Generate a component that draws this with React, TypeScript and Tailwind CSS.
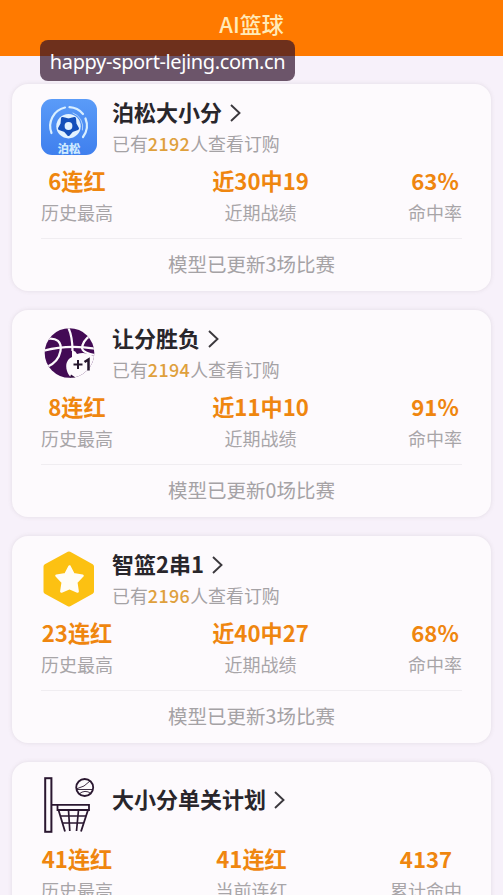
type Stat = { value: string; label: string }

type Plan = {
  id: string
  title: string
  buyers?: string
  stats: Stat[]
  footer?: string
}

const plans: Plan[] = [
  {
    id: "bosong",
    title: "泊松大小分",
    buyers: "2192",
    stats: [
      { value: "6连红", label: "历史最高" },
      { value: "近30中19", label: "近期战绩" },
      { value: "63%", label: "命中率" },
    ],
    footer: "模型已更新3场比赛",
  },
  {
    id: "spread",
    title: "让分胜负",
    buyers: "2194",
    stats: [
      { value: "8连红", label: "历史最高" },
      { value: "近11中10", label: "近期战绩" },
      { value: "91%", label: "命中率" },
    ],
    footer: "模型已更新0场比赛",
  },
  {
    id: "parlay",
    title: "智篮2串1",
    buyers: "2196",
    stats: [
      { value: "23连红", label: "历史最高" },
      { value: "近40中27", label: "近期战绩" },
      { value: "68%", label: "命中率" },
    ],
    footer: "模型已更新3场比赛",
  },
  {
    id: "single",
    title: "大小分单关计划",
    stats: [
      { value: "41连红", label: "历史最高" },
      { value: "41连红", label: "当前连红" },
      { value: "4137", label: "累计命中" },
    ],
  },
]

function BosongIcon() {
  return (
    <svg viewBox="0 0 56 56" className="h-14 w-14">
      <defs>
        <linearGradient id="bosong-bg" x1="0" y1="0" x2="0" y2="1">
          <stop offset="0" stopColor="#5a9bf8" />
          <stop offset="1" stopColor="#3f7fee" />
        </linearGradient>
      </defs>
      <rect width="56" height="56" rx="11" fill="url(#bosong-bg)" />
      <g fill="none" stroke="#d9efff" strokeWidth="2.2" strokeLinecap="round">
        <path d="M24 8.5A19 19 0 0 0 10.5 34" />
        <path d="M28.5 8.2A19 19 0 0 1 42 15" />
        <path d="M44.5 19.5A19 19 0 0 1 42 38" />
        <path d="M32 14A14.8 14.8 0 0 1 41.5 31" strokeWidth="1" opacity="0.7" />
      </g>
      <circle cx="27.5" cy="27.2" r="12.2" fill="#e2f2ff" />
      <path
        d="M21.5 19.5L27.5 21L33.5 19.5L34 25L36.5 29.5L31 31.5L27.5 35.5L24 31.5L18.5 29.5L21 25Z"
        fill="#1550ba"
        stroke="#1550ba"
        strokeWidth="3"
        strokeLinejoin="round"
      />
      <circle cx="27.5" cy="27" r="3.9" fill="#e2f2ff" />
      <text x="28" y="53.5" textAnchor="middle" fontSize="11.5" fontWeight="900" fill="#cdeaff">
        泊松
      </text>
    </svg>
  )
}

function BallIcon() {
  return (
    <svg viewBox="0 0 56 56" className="h-14 w-14">
      <defs>
        <clipPath id="ball-clip">
          <circle cx="28.5" cy="28" r="24.8" />
        </clipPath>
      </defs>
      <g clipPath="url(#ball-clip)">
        <rect width="56" height="56" fill="#430b55" />
        <g fill="none" stroke="#fdfafd" strokeWidth="2.2">
          <path d="M2 26C18 21.5 38 21 56 24" />
          <path d="M27 2C30.5 9 31.5 15 31.5 26" />
          <path d="M5 14C16 12 21 17 19.5 26C18 34 13 39 6 42" />
          <path d="M50 10C44 14 41 18 41 24" />
          <path d="M41 24C43 27.5 48 29 54 30" />
        </g>
        <path d="M31 26Q34 25 36 29Q46 26 56 33V56H31C30 51 27 50 26 46C24 40 26 34 31 32Z" fill="#fdfafd" />
        <path d="M28 55L30 49.5L34.5 52.5V56Z" fill="#2d0a3a" />
      </g>
      <path d="M32.5 39.5H41.5M37 35V44" stroke="#24152c" strokeWidth="2" />
      <path d="M43.5 37L47.5 34.5V45.5" fill="none" stroke="#24152c" strokeWidth="2.5" />
    </svg>
  )
}

function StarIcon() {
  return (
    <svg viewBox="0 0 56 56" className="h-14 w-14">
      <path
        d="M28 3L50.5 15.5V40.5L28 53L5 40.5V15.5Z"
        fill="#fcc112"
        stroke="#fcc112"
        strokeWidth="5"
        strokeLinejoin="round"
      />
      <path
        d="M28.5 15.5L32.5 23.3L41.5 24.7L35.2 31.3L36.6 40.5L28.5 37L20.4 40.5L21.8 31.3L15.5 24.7L24.5 23.3Z"
        fill="#fffdf6"
        stroke="#fffdf6"
        strokeWidth="2.6"
        strokeLinejoin="round"
      />
    </svg>
  )
}

function HoopIcon() {
  return (
    <svg viewBox="0 0 56 56" className="h-14 w-14" fill="none" stroke="#2a1730">
      <rect x="4.2" y="1.2" width="6.2" height="53.6" strokeWidth="2" />
      <path d="M11 27.8H48V33H16.5V28" strokeWidth="1.8" />
      <path d="M17.5 33L24 54.5M47 33L40 54.5" strokeWidth="1.8" />
      <path d="M27.5 33L28.8 54M37.5 33L35.5 54M19 39H45M21 46H43" strokeWidth="1.7" />
      <circle cx="43.7" cy="10.5" r="8.5" strokeWidth="1.8" />
      <path d="M35 12Q44 10 49 4M35.5 12.5H52M38 17Q44 12 50 16.5" strokeWidth="0.9" />
    </svg>
  )
}

function PlanIcon({ id }: { id: string }) {
  if (id === "bosong") return <BosongIcon />
  if (id === "spread") return <BallIcon />
  if (id === "parlay") return <StarIcon />
  return <HoopIcon />
}

function PlanCard({ plan }: { plan: Plan }) {
  return (
    <article className="h-[207px] shrink-0 rounded-2xl bg-[#fdfafd] px-[29px] pt-[15px] shadow-[0_0_4px_rgba(120,110,110,0.16)]">
      <div className="flex h-14 gap-[15px]">
        <div className="shrink-0">
          <PlanIcon id={plan.id} />
        </div>
        <div className={plan.buyers ? "-mt-[3px]" : "mt-1.5"}>
          <h2 className="flex h-8 items-center gap-2 text-[22px] leading-8 font-bold whitespace-nowrap text-[#29262b]">
            <span className="-mt-[3px]">{plan.title}</span>
            <svg viewBox="0 0 11 20" className="mt-0.5 h-5 w-[11px]" fill="none" stroke="#3b383d" strokeWidth="1.9">
              <path d="M1 2L9.5 10L1 18" />
            </svg>
          </h2>
          {plan.buyers && (
            <p className="text-[17.9px] leading-[30px] whitespace-nowrap text-[#a5a2a5]">
              已有<span className="font-medium tracking-[0.4px] text-[#dfa03c]">{plan.buyers}</span>人查看订购
            </p>
          )}
        </div>
      </div>

      <div className="mt-[11px] flex justify-between border-b border-[#f0edf1] pb-[11px]">
        {plan.stats.map((stat) => (
          <div key={stat.label} className="text-center whitespace-nowrap">
            <p className="-mt-px text-[22.2px] leading-[31px] font-bold text-[#ef860f]">{stat.value}</p>
            <p className="mt-px text-[18px] leading-[30px] text-[#a8a5a8]">{stat.label}</p>
          </div>
        ))}
      </div>

      {plan.footer && (
        <p className="text-center text-[19.5px] leading-[49px] text-[#a5a2a5]">{plan.footer}</p>
      )}
    </article>
  )
}

export default function App() {
  return (
    <main className="relative h-[895px] w-full overflow-hidden bg-[#f7f1fa] font-['Noto_Sans_CJK_SC',sans-serif]">
      <header className="flex h-14 items-center justify-center bg-[#ff7a00]">
        <h1 className="-mt-2.5 text-[22px] leading-8 font-medium text-[#ffeab8]">AI篮球</h1>
      </header>

      <div className="flex flex-col gap-[19px] px-3 pt-7">
        {plans.map((plan) => (
          <PlanCard key={plan.id} plan={plan} />
        ))}
      </div>

      <div className="absolute top-10 left-10 flex h-[41px] w-[255px] items-center justify-center rounded-lg bg-[rgba(45,15,40,0.69)] font-['Noto_Sans',sans-serif] text-[20px] tracking-[-0.38px] whitespace-nowrap text-white">
        <span className="mt-0.5">happy-sport-lejing.com.cn</span>
      </div>
    </main>
  )
}
